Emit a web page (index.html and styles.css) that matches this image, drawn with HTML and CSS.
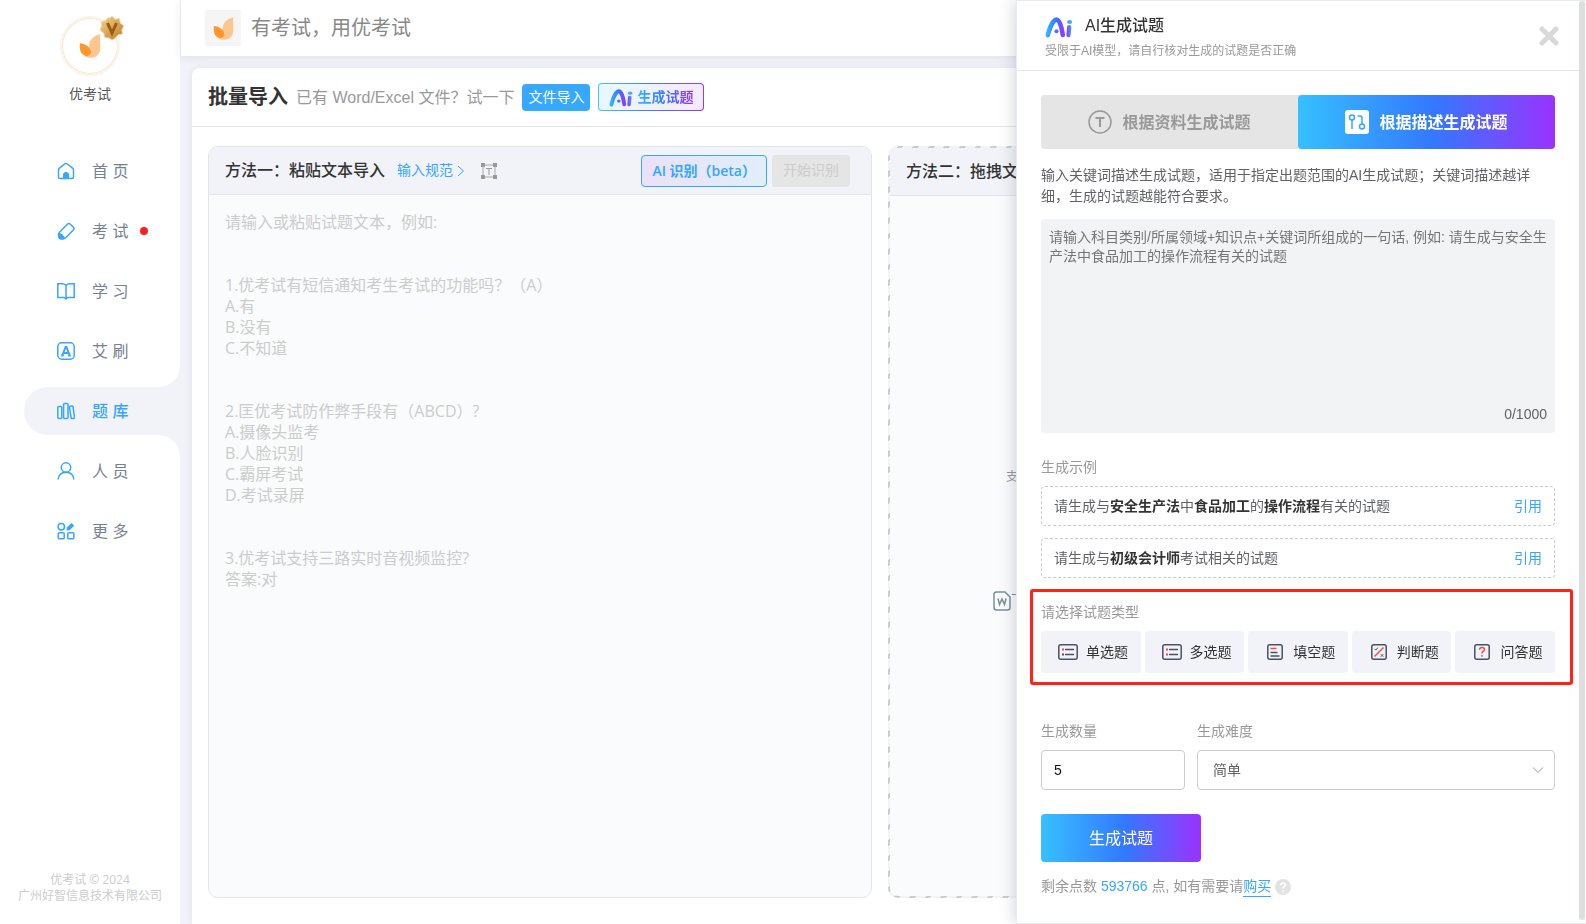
FILE: index.html
```html
<!DOCTYPE html>
<html lang="zh-CN">
<head>
<meta charset="utf-8">
<title>批量导入 - 优考试</title>
<link rel="stylesheet" href="styles.css">
</head>
<body>
<svg class="defs" width="0" height="0" aria-hidden="true">
  <defs>
    <linearGradient id="brand" x1="0" y1="0" x2="28" y2="0" gradientUnits="userSpaceOnUse">
      <stop offset="0" stop-color="#33c1ff"/><stop offset=".42" stop-color="#3376ff"/><stop offset=".62" stop-color="#8a40ff"/><stop offset=".8" stop-color="#7a50ff"/><stop offset="1" stop-color="#35b4ff"/>
    </linearGradient>
    <linearGradient id="gold" x1="0" y1="0" x2="1" y2="1">
      <stop offset="0" stop-color="#f6d98f"/><stop offset=".5" stop-color="#dba655"/><stop offset="1" stop-color="#b9792a"/>
    </linearGradient>
    <symbol id="leaf" viewBox="0 0 24 28">
      <path d="M23 1C16 3 11.500 7 11 14c0 5-2 8-5 10.500C9 27.500 16 28 20 24c3-3 3.500-6 3-11z" fill="#ffc58f"/>
      <path d="M1 11c6 .5 11 4 12 9 .3 3-2 5-5 5-5-1-8-5-7-14z" fill="#ff972c"/>
    </symbol>
    <symbol id="ai" viewBox="0 0 28 22">
      <path d="M2.800 19.200Q5 10 8.500 5.500 11.500 1.800 14 5.500 16.500 10 17.800 19" fill="none" stroke="url(#brand)" stroke-width="4.600" stroke-linecap="round" stroke-linejoin="round"/>
      <circle cx="11.500" cy="15.200" r="2" fill="#5a68ff"/>
      <path d="M24.200 11 23.500 19.200" fill="none" stroke="url(#brand)" stroke-width="4.200" stroke-linecap="round"/>
      <ellipse cx="24.600" cy="6" rx="2.600" ry="1.900" fill="#4aa8ff"/>
    </symbol>
  </defs>
</svg>

<div class="app">
  <aside class="sidebar">
    <div class="profile">
      <div class="avatar">
        <svg width="22" height="26"><use href="#leaf"/></svg>
        <svg class="badge" width="24" height="24" viewBox="0 0 24 24">
          <path d="M12 0l3 3.200 4.500-.7.700 4.500L24 10l-2.200 3.500.7 4.500-4.500.800L15 22.500l-3 1.500-3-2-4.500-.500-.5-4L0 14l1.500-4L1 5.500l4.500-1L8 1.500l2 .500z" fill="url(#gold)" stroke="#f1dcae" stroke-width=".8"/>
          <path d="M7.500 7l4.500 10 4.500-10" fill="none" stroke="#9a5c12" stroke-width="3"/>
        </svg>
      </div>
      <span class="profile-name">优考试</span>
    </div>

    <nav class="nav">
      <a class="nav-item" href="#home">
        <svg class="nav-icon" viewBox="0 0 18 18"><path d="M3 16.500h12q1.500 0 1.500-1.500V8q0-1-.7-1.600L10.400 2q-1.400-1.100-2.800 0L2.200 6.400Q1.500 7 1.500 8v7q0 1.500 1.500 1.500z"/><path class="fill" d="M6 17v-4a3 3 0 0 1 6 0v4z"/></svg>
        <span>首 页</span>
      </a>
      <a class="nav-item" href="#exam">
        <svg class="nav-icon" viewBox="0 0 18 18"><path d="M10.300 2.200q1.500-1.300 3 0l3 2.800q1.300 1.500 0 3l-7.300 7.500q-1.300 1.200-2.700 1.200H4.200q-1.400 0-2-1.500L1.500 13q-.1-1.500 1-2.700z"/><path class="fill" d="M1.500 10.800q3.500.2 6.800 5.500l-2 1.200H3.500q-2-.3-2.500-2.500z"/></svg>
        <span>考 试</span><i class="dot"></i>
      </a>
      <a class="nav-item" href="#learn">
        <svg class="nav-icon" viewBox="0 0 18 18"><path d="M9 3.500Q7.500 1.800 5.500 1.800H.8v13.700h5.700q1.700 0 2.500 1.500.8-1.500 2.500-1.500h5.700V1.800h-4.700q-2 0-3.500 1.700zM9 3.500V17"/></svg>
        <span>学 习</span>
      </a>
      <a class="nav-item" href="#practice">
        <svg class="nav-icon" viewBox="0 0 18 18"><rect x=".8" y=".8" width="16.400" height="16.400" rx="4"/><path class="bold" d="M5.300 13.500 8.600 5h.8l3.300 8.500M6.500 11h5M4.200 13.500h2.600M11.200 13.500h2.600"/></svg>
        <span>艾 刷</span>
      </a>
      <a class="nav-item active" href="#bank" aria-current="page">
        <svg class="nav-icon" viewBox="0 0 18 18"><rect x=".8" y="4.500" width="4" height="12" rx="1"/><rect x="6.600" y="1.500" width="4.400" height="15" rx="1"/><path d="M12.400 5.300q-.1-1 .8-1.100l1.700-.3q.9-.1 1.100.8l1.500 10.500q.1 1-.8 1.200l-1.600.2q-.9.100-1-.8z"/></svg>
        <span>题 库</span>
      </a>
      <a class="nav-item" href="#people">
        <svg class="nav-icon" viewBox="0 0 18 18"><circle cx="9" cy="5.500" r="4.700"/><path d="M1.200 17.500q.5-7.200 7.800-7.300 7.300.1 7.800 7.300"/></svg>
        <span>人 员</span>
      </a>
      <a class="nav-item" href="#more">
        <svg class="nav-icon" viewBox="0 0 18 18"><circle cx="4.300" cy="4.700" r="3.200"/><rect x="1.200" y="10.800" width="6" height="6" rx="1"/><rect x="10.800" y="10.800" width="6" height="6" rx="1"/><path class="fill" d="M14.500 1l2.700 2.700-4.700 4.500-3 .3.300-3z"/></svg>
        <span>更 多</span>
      </a>
    </nav>

    <footer class="copyright">优考试 © 2024<br>广州好智信息技术有限公司</footer>
  </aside>

  <div class="content">
    <header class="topbar">
      <span class="topbar-logo"><svg width="21" height="25"><use href="#leaf"/></svg></span>
      <span>有考试，用优考试</span>
    </header>

    <main class="main">
      <section class="card">
        <header class="card-head">
          <h1>批量导入</h1>
          <span class="hint">已有 Word/Excel 文件？试一下</span>
          <button class="btn-file" type="button">文件导入</button>
          <button class="btn-ai" type="button"><svg width="24" height="19"><use href="#ai"/></svg><span>生成试题</span></button>
        </header>

        <div class="panels">
          <section class="panel">
            <header class="panel-head">
              <h2>方法一：粘贴文本导入</h2>
              <a class="rule-link" href="#rules">输入规范<svg width="8" height="12" viewBox="0 0 8 12"><path d="M1 1l5.500 5L1 11" fill="none" stroke="currentColor"/></svg></a>
              <svg class="frame-icon" width="16" height="16" viewBox="0 0 16 16"><path d="M2 2h12v12H2z" fill="none" stroke="#aaa"/><path d="M0 0h4v4H0zM12 0h4v4h-4zM0 12h4v4H0zM12 12h4v4h-4z" fill="#999"/><path d="M5 5.500h6M8 5.500V12" fill="none" stroke="#999"/></svg>
              <div class="panel-actions">
                <button class="btn-detect" type="button">AI 识别（beta）</button>
                <button class="btn-start" type="button" disabled>开始识别</button>
              </div>
            </header>
            <textarea class="paste" aria-label="试题文本" placeholder="请输入或粘贴试题文本，例如:&#10;&#10;&#10;1.优考试有短信通知考生考试的功能吗？（A）&#10;A.有&#10;B.没有&#10;C.不知道&#10;&#10;&#10;2.匡优考试防作弊手段有（ABCD）?&#10;A.摄像头监考&#10;B.人脸识别&#10;C.霸屏考试&#10;D.考试录屏&#10;&#10;&#10;3.优考试支持三路实时音视频监控?&#10;答案:对"></textarea>
          </section>

          <section class="panel panel-drop">
            <header class="panel-head"><h2>方法二：拖拽文件</h2></header>
            <div class="drop">
              <p class="drop-tip">支持</p>
              <a class="drop-link" href="#template"><svg width="18" height="20" viewBox="0 0 18 20"><path d="M3.500 1h8.500l5 5v10.500q0 2.500-2.500 2.500h-11Q1 19 1 16.500v-13Q1 1 3.500 1z" fill="none" stroke="currentColor" stroke-width="1.500"/><path d="M5 7.500 6.500 13.500 9 8l2.500 5.500L13 7.500" fill="none" stroke="currentColor" stroke-width="1.500"/></svg>下载</a>
            </div>
          </section>
        </div>
      </section>
    </main>
  </div>
</div>

<aside class="drawer" role="dialog" aria-labelledby="drawer-title">
  <header class="drawer-head">
    <div class="drawer-heading">
      <div class="drawer-title"><svg width="28" height="22"><use href="#ai"/></svg><h2 id="drawer-title">AI生成试题</h2></div>
      <p class="drawer-sub">受限于AI模型，请自行核对生成的试题是否正确</p>
    </div>
    <button class="close" type="button" aria-label="关闭"><svg width="20" height="20" viewBox="0 0 20 20"><path d="M3 3l14 14M17 3L3 17" fill="none" stroke="#d9d9d9" stroke-width="5" stroke-linecap="round"/></svg></button>
  </header>

  <form class="drawer-body">
    <div class="tabs">
      <button class="tab" type="button"><svg width="24" height="24" viewBox="0 0 24 24"><circle cx="12" cy="12" r="11" fill="none" stroke="#999" stroke-width="1.500"/><path d="M7.500 8h9M12 8v9" fill="none" stroke="#999" stroke-width="2"/></svg>根据资料生成试题</button>
      <button class="tab selected" type="button"><svg width="24" height="24" viewBox="0 0 24 24"><rect width="24" height="24" rx="3" fill="#fff"/><g fill="none" stroke="#38a4ff" stroke-width="1.500"><circle cx="7" cy="7.500" r="2.500"/><path d="M7 10v9M12.500 6H15q2 0 2 2v6"/><circle cx="17" cy="16.500" r="2.500"/></g></svg>根据描述生成试题</button>
    </div>
    <p class="desc">输入关键词描述生成试题，适用于指定出题范围的AI生成试题；关键词描述越详细，生成的试题越能符合要求。</p>
    <div class="prompt">
      <textarea aria-label="试题描述" placeholder="请输入科目类别/所属领域+知识点+关键词所组成的一句话, 例如: 请生成与安全生产法中食品加工的操作流程有关的试题"></textarea>
      <span class="counter">0/1000</span>
    </div>

    <section class="group">
      <h3 class="label">生成示例</h3>
      <div class="samples">
        <div class="sample"><span>请生成与<b>安全生产法</b>中<b>食品加工</b>的<b>操作流程</b>有关的试题</span><a href="#use-1">引用</a></div>
        <div class="sample"><span>请生成与<b>初级会计师</b>考试相关的试题</span><a href="#use-2">引用</a></div>
      </div>
    </section>

    <section class="group types">
      <h3 class="label">请选择试题类型</h3>
      <div class="type-list">
        <button class="type" type="button"><svg viewBox="0 0 20 16"><rect class="ink" x=".8" y=".8" width="18.400" height="14.400" rx="2"/><path class="ink" d="M7 5.500h9M7 10.500h9"/><path d="M4 4.500h2v2H4z" fill="#f24b4b"/><path d="M4 9.500h2v2H4z" fill="#4b5162"/></svg>单选题</button>
        <button class="type" type="button"><svg viewBox="0 0 20 16"><rect class="ink" x=".8" y=".8" width="18.400" height="14.400" rx="2"/><path class="ink" d="M7 5.500h9M7 10.500h9"/><path d="M4 4.500h2v2H4zM4 9.500h2v2H4z" fill="#f24b4b"/></svg>多选题</button>
        <button class="type" type="button"><svg viewBox="0 0 20 16"><rect class="ink" x="2.800" y=".8" width="14.400" height="14.400" rx="2"/><path class="ink" d="M5.500 8.500h7M5.500 12h9"/><path class="red" d="M5.500 4.500h6"/></svg>填空题</button>
        <button class="type" type="button"><svg viewBox="0 0 20 16"><rect class="ink" x="2.800" y=".8" width="14.400" height="14.400" rx="2"/><path class="ink thin" d="M5.500 4.800l1.300 1.300 2-2.500M11.800 10.200l2.500 2.500M14.300 10.200l-2.500 2.500"/><path class="red" d="M14.500 3.500 5.500 12.500"/></svg>判断题</button>
        <button class="type" type="button"><svg viewBox="0 0 20 16"><rect class="ink" x="2.800" y=".8" width="14.400" height="14.400" rx="2"/><path class="red" d="M7.500 5.800Q7.500 3.500 10 3.500t2.500 2q0 1.300-1.500 2-1 .5-1 2M10 11v1.800"/></svg>问答题</button>
      </div>
    </section>

    <div class="fields">
      <div class="field"><label class="label" for="count">生成数量</label><input id="count" type="text" inputmode="numeric" value="5"></div>
      <div class="field field-wide"><label class="label" for="level">生成难度</label>
        <div class="select"><select id="level"><option>简单</option></select><svg width="12" height="8" viewBox="0 0 12 8"><path d="M1 1.500l5 5 5-5" fill="none" stroke="#c0c4cc" stroke-width="1.200"/></svg></div>
      </div>
    </div>

    <button class="submit" type="button">生成试题</button>
    <p class="points">剩余点数 <em>593766</em> 点, 如有需要请<a href="#buy">购买</a><svg width="16" height="16" viewBox="0 0 16 16"><circle cx="8" cy="8" r="8" fill="#e3e3e3"/><path d="M5.700 6.300Q5.800 4 8 4t2.300 2q0 1.100-1.300 1.900-1 .6-1 1.600M8 11v1.500" fill="none" stroke="#fff" stroke-width="1.500"/></svg></p>
  </form>
</aside>
</body>
</html>
```
FILE: styles.css
```css
* { box-sizing: border-box; }

body {
  margin: 0;
  background: #f2f3f8;
  color: #606266;
  font: 14px/21px "Liberation Sans", "Noto Sans CJK SC", sans-serif;
  overflow: hidden;
}

h1, h2, h3, p { margin: 0; font-weight: inherit; font-size: inherit; }
button, input, textarea, select { font: inherit; color: inherit; }
button { border: 0; padding: 0; background: none; cursor: pointer; white-space: nowrap; }
textarea { display: block; border: 0; resize: none; outline: 0; background: none; }
a { color: #36a6ff; text-decoration: none; }
svg { flex: none; }
.defs { position: absolute; }

.app { display: flex; height: 100vh; }

/* Sidebar */
.sidebar {
  display: flex;
  flex-direction: column;
  flex: none;
  width: 180px;
  background: #fff;
}

.profile { display: flex; flex-direction: column; align-items: center; gap: 8px; padding-top: 16px; }

.avatar {
  position: relative;
  display: grid;
  place-items: center;
  width: 60px;
  height: 60px;
  border: 2px solid #fbf4e8;
  border-radius: 50%;
  box-shadow: inset 0 0 0 1px #f5e6cc;
}

.badge { position: absolute; top: -2px; right: -6px; }
.profile-name { color: #555; }

.nav { display: flex; flex-direction: column; gap: 12px; margin-top: 42px; padding-left: 24px; }

.nav-item {
  position: relative;
  display: flex;
  align-items: center;
  height: 48px;
  padding-left: 33px;
  border-radius: 24px 0 0 24px;
  color: #76828f;
  font-size: 16px;
}

.nav-icon { width: 18px; height: 18px; margin-right: 17px; fill: none; stroke: #36a6ff; stroke-width: 1.5; }
.nav-icon .fill { fill: #36a6ff; stroke: none; }
.nav-icon .bold { stroke-width: 2; }
.dot { width: 8px; height: 8px; margin-left: 12px; border-radius: 50%; background: #ff1c24; }

.nav-item.active { background: #f2f3f8; color: #36a6ff; font-weight: 500; }
.nav-item.active::before,
.nav-item.active::after {
  content: "";
  position: absolute;
  right: 0;
  width: 20px;
  height: 20px;
}
.nav-item.active::before { bottom: 100%; background: radial-gradient(circle at 0 0, #fff 19px, #f2f3f8 20px); }
.nav-item.active::after { top: 100%; background: radial-gradient(circle at 0 100%, #fff 19px, #f2f3f8 20px); }

.copyright {
  margin-top: auto;
  padding-bottom: 20px;
  color: #ccc;
  font: 12px/16px "Open Sans", "Noto Sans CJK SC", sans-serif;
  text-align: center;
}

/* Page */
.content { display: flex; flex-direction: column; flex: 1; min-width: 0; }

.topbar {
  display: flex;
  align-items: center;
  gap: 10px;
  height: 56px;
  padding-left: 24px;
  border-left: 1px solid #e9eaf0;
  background: #fff;
  box-shadow: 0 2px 8px rgba(30, 40, 90, .08);
  color: #888;
  font-size: 20px;
}

.topbar-logo { display: grid; place-items: center; width: 36px; height: 36px; background: #f5f5f5; }

.main { display: flex; flex: 1; min-height: 0; padding: 12px 18px 0 12px; }

.card {
  display: flex;
  flex-direction: column;
  flex: 1;
  min-width: 0;
  border-radius: 8px 8px 0 0;
  background: #fff;
  box-shadow: 0 0 8px rgba(30, 40, 90, .08);
}

.card-head {
  display: flex;
  align-items: center;
  gap: 8px;
  height: 59px;
  padding: 0 16px;
  border-bottom: 1px solid #e6e6e6;
}

.card-head h1 { color: #333; font-size: 20px; font-weight: 700; }
.hint { color: #999; font-size: 16px; }
.btn-file { height: 27px; padding: 0 6px; border-radius: 4px; background: #36a9ff; color: #fff; }

.btn-ai {
  display: flex;
  align-items: center;
  gap: 4px;
  height: 28px;
  padding: 0 10px;
  border: 1px solid transparent;
  border-radius: 4px;
  background:
    linear-gradient(90deg, #e9f8ff, #f5eaff) padding-box,
    linear-gradient(90deg, #43c4ff, #3f7dff, #9a33ff) border-box;
  font-weight: 700;
}

.btn-ai span {
  background: linear-gradient(90deg, #33b5ff, #3878ff, #9a33ff);
  -webkit-background-clip: text;
  background-clip: text;
  color: transparent;
}

.panels {
  display: grid;
  grid-template-columns: 1fr 1fr;
  gap: 16px;
  flex: 1;
  min-height: 0;
  padding: 19px 16px 26px;
}

.panel {
  display: flex;
  flex-direction: column;
  min-width: 0;
  border: 1px solid #e3e5e8;
  border-radius: 10px;
  background: #fafbfd;
  overflow: hidden;
}

/* Slanted dashes all round the drop area */
.panel-drop {
  border: 2px solid transparent;
  background:
    linear-gradient(#fafbfd, #fafbfd) padding-box,
    repeating-linear-gradient(-45deg, #ccc 0 4px, #f2f3f5 4px 11px) border-box;
}

.panel-head {
  display: flex;
  align-items: center;
  flex: none;
  height: 48px;
  padding: 0 21px 0 16px;
  border-bottom: 1px solid #e3e5e8;
  background: #f2f3f8;
}

.panel-head h2 { color: #333; font-size: 16px; font-weight: 500; white-space: nowrap; }
.rule-link { display: flex; align-items: center; gap: 4px; margin-left: 12px; }
.frame-icon { margin-left: 16px; }
.panel-actions { display: flex; gap: 5px; margin-left: auto; }
.panel-actions button { height: 32px; border-radius: 4px; }

.btn-detect {
  padding: 0 10px;
  border: 1px solid #36a6ff;
  background: linear-gradient(90deg, #ebe0f8, #dfeffa);
  color: #36a6ff;
  font-family: "Open Sans", "Noto Sans CJK SC", sans-serif;
  font-weight: 600;
}

.btn-start { padding: 0 11px; background: #e5e5e5; color: #ccc; }

.paste { flex: 1; width: 100%; padding: 17px 16px; font: 16px/21px "Open Sans", "Noto Sans CJK SC", sans-serif; }
.paste::placeholder { color: #ccc; }

.drop { display: flex; flex-direction: column; align-items: flex-start; gap: 102px; padding: 271px 0 0 103px; }
.drop-tip { margin-left: 13px; color: #999; font-size: 12px; }
.drop-link { display: flex; align-items: center; color: #78909c; }

/* Drawer */
.drawer {
  position: fixed;
  top: 0;
  right: 0;
  bottom: 0;
  width: 570px;
  max-width: 100%;
  padding-right: 7px;
  border: 1px solid #e8ebf2;
  border-right: 0;
  background: #fff;
  box-shadow: -2px 0 14px rgba(40, 60, 80, .2);
}

/* Scroll thumb along the right edge */
.drawer::after {
  content: "";
  position: absolute;
  top: 0;
  right: 1px;
  bottom: 3px;
  width: 6px;
  border-radius: 3px;
  background: #dddee0;
}

.drawer-head {
  display: flex;
  align-items: center;
  justify-content: space-between;
  height: 70px;
  padding: 0 20px 0 28px;
  border-bottom: 1px solid #e6e6e6;
}

.drawer-heading { padding-top: 4px; }
.drawer-title { display: flex; align-items: center; gap: 12px; height: 24px; }
.drawer-title svg { align-self: flex-end; }
.drawer-title h2 { color: #333; font-size: 16px; font-weight: 500; }
.drawer-sub { margin-top: 3px; color: #999; font-size: 12px; }
.close { display: grid; }

.drawer-body { padding: 24px 24px 0; }

.tabs { display: grid; grid-template-columns: 1fr 1fr; border-radius: 4px; background: #e5e5e5; }

.tab {
  display: flex;
  align-items: center;
  justify-content: center;
  gap: 10px;
  height: 54px;
  border-radius: 4px;
  color: #999;
  font-size: 16px;
  font-weight: 700;
}

.tab.selected,
.submit { background: linear-gradient(90deg, #36c0ff, #3478ff 53%, #9a33ff); color: #fff; }

.desc { margin-top: 16px; }

.prompt {
  display: flex;
  flex-direction: column;
  height: 214px;
  margin-top: 12px;
  padding: 9px 8px 8px;
  border-radius: 4px;
  background: #f2f3f5;
}

.prompt textarea { flex: 1; width: 100%; padding: 0; line-height: 19px; }
.prompt textarea::placeholder { color: #757575; }
.counter { align-self: flex-end; }

.group { margin-top: 24px; }
.label { display: block; margin-bottom: 8px; color: #999; }

.samples { display: grid; gap: 12px; }

.sample {
  display: flex;
  align-items: center;
  justify-content: space-between;
  height: 40px;
  padding: 0 12px;
  border: 1px dashed #ccc;
  border-radius: 4px;
}

.sample b { color: #333; }

.types { position: relative; }
.types::after {
  content: "";
  position: absolute;
  inset: -13px -18px -12px -11px;
  border: 3px solid #ff2218;
  border-radius: 3px;
  pointer-events: none;
}

.type-list { display: grid; grid-template-columns: repeat(5, 1fr); gap: 4px; }

.type {
  display: flex;
  align-items: center;
  gap: 8px;
  height: 42px;
  padding-left: 17px;
  border-radius: 4px;
  background: #f2f3f8;
  color: #333;
}

.type svg { width: 20px; height: 16px; fill: none; stroke-width: 1.5; }
.type .ink { stroke: #4b5162; }
.type .thin { stroke-width: 1; }
.type .red { stroke: #f24b4b; }

.fields { display: flex; gap: 12px; margin-top: 48px; }
.field { flex: 144 1 0; min-width: 0; }
.field-wide { flex-grow: 358; }

.field input,
.field select {
  display: block;
  width: 100%;
  height: 40px;
  padding: 0 12px;
  border: 1px solid #ccc;
  border-radius: 4px;
  background: #fff;
}

.field input { color: #111; }
.field select { padding: 0 15px; appearance: none; }
.select { position: relative; }
.select svg { position: absolute; top: 16px; right: 11px; pointer-events: none; }

.submit { display: block; width: 160px; height: 48px; margin-top: 24px; border-radius: 4px; font-size: 16px; }

.points { display: flex; align-items: center; margin-top: 14px; color: #999; white-space: pre; }
.points em { color: #36a6ff; font-style: normal; }
.points a { border-bottom: 1px solid; line-height: 19px; }
.points svg { margin-left: 4px; }
```
